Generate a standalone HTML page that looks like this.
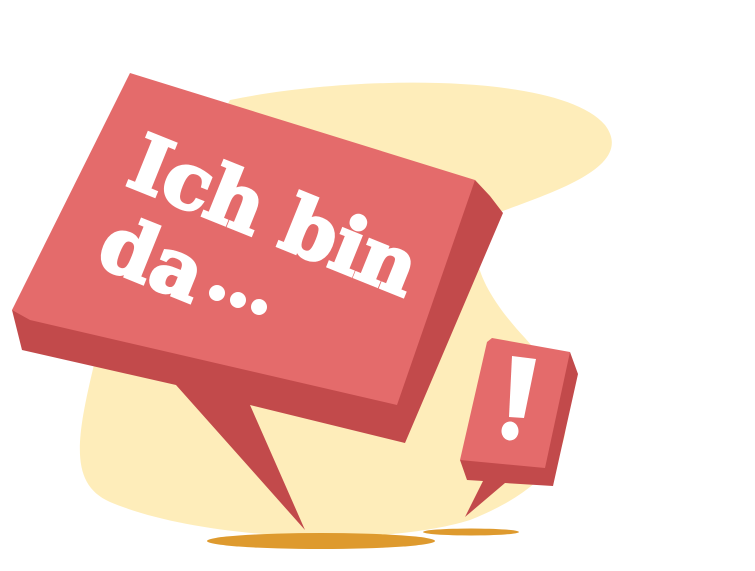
<!DOCTYPE html>
<html><head><style>
html,body{margin:0;padding:0;background:#fff;width:755px;height:571px;overflow:hidden}
</style></head><body>
<svg width="755" height="571" viewBox="0 0 755 571" xmlns="http://www.w3.org/2000/svg">
<path d="M230 100 C350 75,560 72,605 125 C635 165,560 190,500 212 C455 238,480 290,525 338 C580 400,595 470,470 520 C380 548,200 540,110 502 C65 482,78 430,100 340 Z" fill="#FEEDBA"/>
<ellipse cx="321" cy="541" rx="114" ry="8" fill="#DE9A2E"/>
<ellipse cx="471" cy="532" rx="48" ry="3.5" fill="#DE9A2E"/>
<path d="M12 310 L22 350 L176 385 L305 530 L250 405 L405 443 L503 213 L490 196 L475 180 Z" fill="#C24A4B"/>
<path d="M130 73 L475 180 L397 405 L30 320 L12 310 Z" fill="#E46B6B"/>
<path d="M460 460 L467 480 L483 481 L465 517 L505 483 L553 486 L578 374 L570 352 Z" fill="#C24A4B"/>
<path d="M487 342 L492 338 L570 352 L545 468 L460 460 Z" fill="#E46B6B"/>
<path d="M512 356 L536 359 L524 418 L509 417 Z" fill="#fff"/>
<ellipse cx="510" cy="431" rx="8.5" ry="9.5" fill="#fff"/>
<g font-family="'DejaVu Serif','Liberation Serif',serif" font-weight="bold" fill="#fff" stroke="#fff" stroke-width="3" font-size="78">
<text transform="translate(124,184) rotate(22)" letter-spacing="-1">Ich bin</text>
<text transform="translate(94,264) rotate(22)" letter-spacing="0">da</text>
</g>
<g fill="#fff">
<circle cx="217" cy="293" r="8"/>
<circle cx="238" cy="300" r="8"/>
<circle cx="259" cy="307" r="8"/>
</g>
</svg>
</body></html>
